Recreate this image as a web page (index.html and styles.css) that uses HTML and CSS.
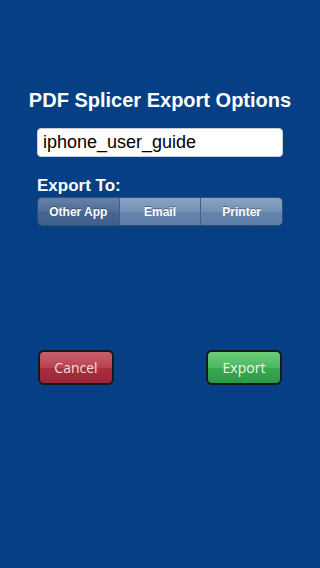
FILE: index.html
```html
<!DOCTYPE html>
<html>
<head>
<meta charset="utf-8">
<link rel="stylesheet" href="styles.css">
</head>
<body>
<div class="screen">
  <h1 class="title">PDF Splicer Export Options</h1>
  <div class="field">iphone_user_guide</div>
  <div class="label">Export To:</div>
  <div class="segmented">
    <div class="seg selected">Other App</div>
    <div class="seg">Email</div>
    <div class="seg">Printer</div>
  </div>
  <div class="buttons">
    <div class="btn cancel">Cancel</div>
    <div class="btn export">Export</div>
  </div>
</div>
</body>
</html>
```
FILE: styles.css
```css
html, body {
  margin: 0;
  padding: 0;
  background: #063f83;
}
.screen {
  width: 320px;
  height: 568px;
  background: #063f83;
  display: flex;
  flex-direction: column;
  font-family: "Liberation Sans", Arial, sans-serif;
  color: #fff;
  box-sizing: border-box;
  padding: 89px 37px 0 37px;
}
.title {
  margin: 0 -20px;
  font-size: 20px;
  line-height: 22px;
  font-weight: bold;
  text-align: center;
  color: #fff;
}
.field {
  margin-top: 17px;
  height: 29px;
  box-sizing: border-box;
  background: #fff;
  border-radius: 4px;
  border: 1px solid #c8cdd6;
  color: #000;
  font-size: 18px;
  line-height: 27px;
  padding-left: 5px;
}
.label {
  margin-top: 19px;
  font-size: 17px;
  line-height: 19px;
  font-weight: bold;
}
.segmented {
  margin-top: 2px;
  height: 29px;
  display: flex;
  border-radius: 5px;
  overflow: hidden;
  border: 1px solid #2c4f80;
  box-sizing: border-box;
}
.seg {
  flex: 1;
  display: flex;
  align-items: center;
  justify-content: center;
  font-size: 12px;
  font-weight: bold;
  color: #fff;
  text-shadow: 0 -1px 0 rgba(0,0,0,0.35);
  background: linear-gradient(#8ca3c3 0%, #7290b6 50%, #6583ab 51%, #5f7ea7 100%);
  border-left: 1px solid #3e5f8d;
}
.seg:first-child {
  border-left: none;
}
.seg.selected {
  background: linear-gradient(#6681a8 0%, #4f6d98 50%, #45648f 51%, #415f8b 100%);
}
.buttons {
  margin-top: 124px;
  display: flex;
  justify-content: space-between;
  padding: 0 1px 0 1px;
}
.btn {
  width: 76px;
  height: 35px;
  box-sizing: border-box;
  border: 2px solid #111820;
  border-radius: 6px;
  display: flex;
  align-items: center;
  justify-content: center;
  font-family: "Open Sans", "Liberation Sans", sans-serif;
  font-size: 14px;
}
.cancel {
  background: linear-gradient(#c8606c 0%, #b84352 50%, #a82f40 51%, #9c2435 100%);
  color: #f2dede;
}
.export {
  background: linear-gradient(#6ccc78 0%, #4cb862 50%, #3aa853 51%, #2e9a48 100%);
  color: #eef8ee;
}
```
